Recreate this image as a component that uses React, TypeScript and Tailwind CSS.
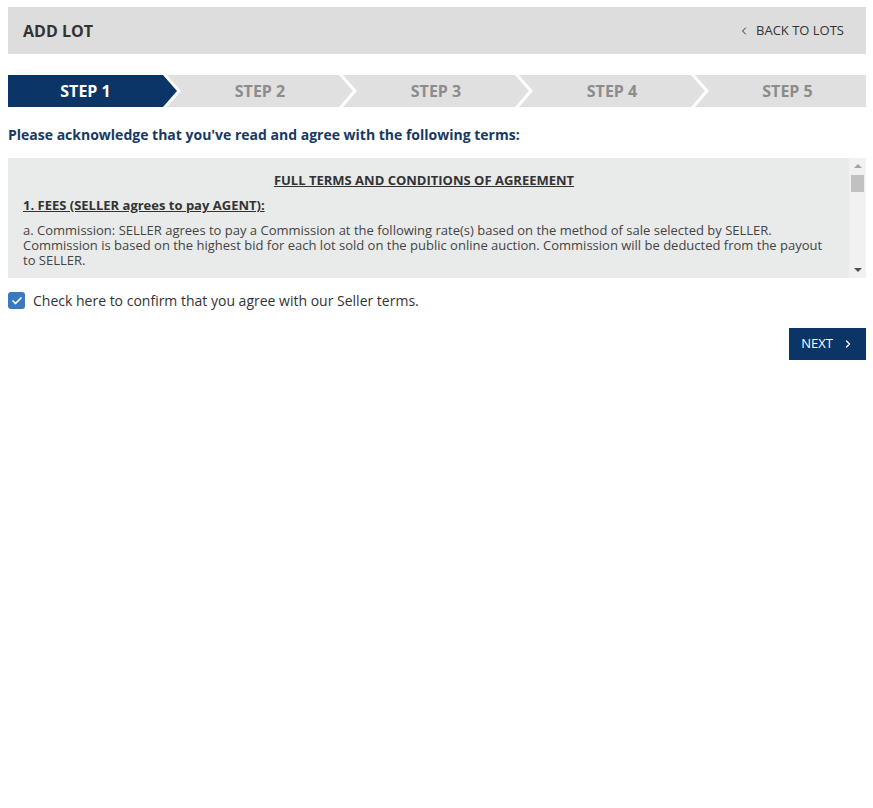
import { Check, ChevronLeft, ChevronRight } from "lucide-react";

const steps = ["STEP 1", "STEP 2", "STEP 3", "STEP 4", "STEP 5"];

function StepBar() {
  return (
    <div className="flex h-8 mt-[21px]">
      {steps.map((label, i) => {
        const first = i === 0;
        const last = i === steps.length - 1;
        const shape = first
          ? "w-[169px] pr-[14px] [clip-path:polygon(0_0,calc(100%-14px)_0,100%_50%,calc(100%-14px)_100%,0_100%)]"
          : last
          ? "w-[171px] -ml-[10px] pl-[14px] [clip-path:polygon(0_0,100%_0,100%_100%,0_100%,14px_50%)]"
          : "w-[186px] -ml-[10px] px-[14px] [clip-path:polygon(0_0,calc(100%-14px)_0,100%_50%,calc(100%-14px)_100%,0_100%,14px_50%)]";
        return (
          <div
            key={label}
            className={`${shape} flex items-center justify-center text-[16px] font-bold ${
              first ? "bg-[#0c3567] text-white" : "bg-[#dfe0df] text-[#8c8c8c]"
            }`}
          >
            {label}
          </div>
        );
      })}
    </div>
  );
}

export default function App() {
  return (
    <div className="min-h-screen bg-white pl-2 pr-[7px] pt-[7px] font-['Open_Sans',sans-serif] text-[#333]">
      {/* Header */}
      <div className="flex h-[47px] items-center justify-between bg-[#dcdddc] pl-[15px] pr-[22px]">
        <h1 className="text-[16px] font-bold text-[#333]">ADD LOT</h1>
        <a href="#" className="flex items-center gap-[6px] text-[13px] text-[#333]">
          <ChevronLeft className="h-3 w-3" strokeWidth={2} />
          <span>BACK TO LOTS</span>
        </a>
      </div>

      <StepBar />

      <p className="mt-[17px] text-[14px] font-bold text-[#163a63]">
        Please acknowledge that you've read and agree with the following terms:
      </p>

      {/* Terms box */}
      <div className="mt-[13px] flex h-[120px] bg-[#e9eaea]">
        <div className="flex-1 overflow-hidden pl-[15px] pr-[24px] pt-[15px] text-[13px] leading-[15px] text-[#444]">
          <p className="text-center font-bold text-[#333] underline">
            FULL TERMS AND CONDITIONS OF AGREEMENT
          </p>
          <p className="mt-[10px] font-bold text-[#333] underline">
            1. FEES (SELLER agrees to pay AGENT):
          </p>
          <p className="mt-[10px]">
            a. Commission: SELLER agrees to pay a Commission at the following rate(s) based on the method of sale
            selected by SELLER. Commission is based on the highest bid for each lot sold on the public online auction.
            Commission will be deducted from the payout to SELLER.
          </p>
        </div>
        {/* scrollbar */}
        <div className="flex w-[17px] flex-col items-center bg-[#f1f1f1]">
          <div className="mt-[6px] h-0 w-0 border-x-[4px] border-b-[4px] border-x-transparent border-b-[#a3a3a3]" />
          <div className="mt-[7px] h-[17px] w-[13px] bg-[#c1c1c1]" />
          <div className="mt-auto mb-[6px] h-0 w-0 border-x-[4px] border-t-[4px] border-x-transparent border-t-[#505050]" />
        </div>
      </div>

      {/* Confirm */}
      <label className="mt-[12px] flex items-center gap-2 text-[14px] text-[#333]">
        <span className="flex h-[17px] w-[17px] items-center justify-center rounded-[3px] bg-[#3a78c2]">
          <Check className="h-3 w-3 text-white" strokeWidth={3.5} />
        </span>
        Check here to confirm that you agree with our Seller terms.
      </label>

      <div className="mt-[17px] flex justify-end">
        <button className="flex h-8 w-[77px] items-center justify-center gap-[9px] bg-[#0c3567] text-[13px] text-white">
          NEXT
          <ChevronRight className="h-3 w-3" strokeWidth={2.5} />
        </button>
      </div>
    </div>
  );
}
